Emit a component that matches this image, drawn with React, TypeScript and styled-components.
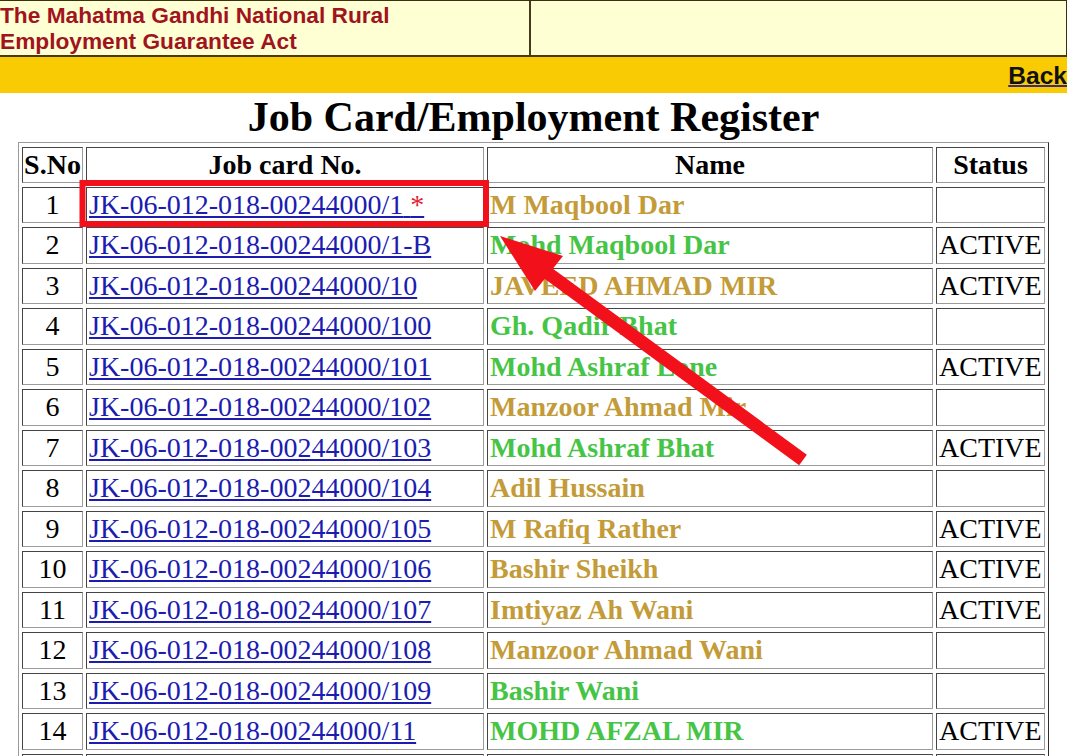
import React from "react";
import styled, { createGlobalStyle } from "styled-components";

const GlobalStyle = createGlobalStyle`
  html, body {
    margin: 0;
    padding: 0;
    background: #ffffff;
    overflow: hidden;
  }
  body {
    font-family: "Liberation Serif", "Times New Roman", serif;
  }
`;

const Page = styled.div`
  position: relative;
  width: 1067px;
  height: 756px;
  overflow: hidden;
`;

const Banner = styled.div`
  display: grid;
  grid-template-columns: 531px 1fr;
  height: 54px;
  background: #ffffd4;
  border-top: 1px solid #3b2f12;
  border-bottom: 2px solid #4a3814;
  border-right: 1px solid #3b2f12;
`;

const BannerCell = styled.div<{ $divider?: boolean }>`
  padding-top: 1px;
  border-right: ${(p) => (p.$divider ? "2px solid #463a1c" : "none")};
  font-family: "Liberation Sans", Arial, sans-serif;
  font-weight: bold;
  font-size: 22.7px;
  line-height: 26px;
  color: #a01420;
`;

const YellowBar = styled.div`
  display: flex;
  justify-content: flex-end;
  align-items: flex-start;
  height: 36px;
  background: #f8cb02;
`;

const BackLink = styled.a`
  font-family: "Liberation Sans", Arial, sans-serif;
  font-weight: bold;
  font-size: 24.6px;
  line-height: 30px;
  margin-top: 4px;
  color: #111;
  text-decoration: underline;
  text-decoration-color: #3a2a8c;
  text-decoration-thickness: 2px;
  cursor: pointer;
`;

const Title = styled.h1`
  margin: 0;
  text-align: center;
  font-family: "Liberation Serif", "Times New Roman", serif;
  font-weight: bold;
  font-size: 42px;
  line-height: 48.5px;
  color: #000;
`;

const Register = styled.table`
  width: 1031px;
  margin: 0 auto;
  table-layout: fixed;
  border-collapse: separate;
  border-spacing: 3px 4px;
  border-top: 1px solid #9a9a9a;
  border-left: 1px solid #9a9a9a;
  border-bottom: 1px solid #2e2e2e;
  border-right: 1px solid #2e2e2e;
  font-family: "Liberation Serif", "Times New Roman", serif;
  font-size: 28px;
`;

const HeadCell = styled.th<{ $w: number }>`
  box-sizing: border-box;
  width: ${(p) => p.$w}px;
  padding: 0 1px;
  height: 36px;
  line-height: 34px;
  font-weight: bold;
  text-align: center;
  white-space: nowrap;
  border-top: 1px solid #454545;
  border-left: 1px solid #454545;
  border-bottom: 1px solid #9c9c9c;
  border-right: 1px solid #9c9c9c;
`;

const Cell = styled.td<{ $align?: string }>`
  box-sizing: border-box;
  padding: 0 2px;
  height: 36.5px;
  line-height: 34.5px;
  text-align: ${(p) => p.$align || "left"};
  white-space: nowrap;
  overflow: hidden;
  border-top: 1px solid #454545;
  border-left: 1px solid #454545;
  border-bottom: 1px solid #9c9c9c;
  border-right: 1px solid #9c9c9c;
  color: #000;
`;

const CardLink = styled.a`
  color: #1c1cb0;
  text-decoration: underline;
  cursor: pointer;
`;

const Star = styled.span`
  color: #e41c34;
`;

const PersonName = styled.span<{ $tone: "gold" | "green" }>`
  font-weight: bold;
  color: ${(p) => (p.$tone === "gold" ? "#c39b38" : "#46c446")};
`;

const Overlay = styled.svg`
  position: absolute;
  top: 0;
  left: 0;
  pointer-events: none;
`;

type Row = {
  card: string;
  name: string;
  tone: "gold" | "green";
  active: boolean;
  star?: boolean;
};

const rows: Row[] = [
  { card: "JK-06-012-018-00244000/1", name: "M Maqbool Dar", tone: "gold", active: false, star: true },
  { card: "JK-06-012-018-00244000/1-B", name: "Mohd Maqbool Dar", tone: "green", active: true },
  { card: "JK-06-012-018-00244000/10", name: "JAVEED AHMAD MIR", tone: "gold", active: true },
  { card: "JK-06-012-018-00244000/100", name: "Gh. Qadir Bhat", tone: "green", active: false },
  { card: "JK-06-012-018-00244000/101", name: "Mohd Ashraf Lone", tone: "green", active: true },
  { card: "JK-06-012-018-00244000/102", name: "Manzoor Ahmad Mir", tone: "gold", active: false },
  { card: "JK-06-012-018-00244000/103", name: "Mohd Ashraf Bhat", tone: "green", active: true },
  { card: "JK-06-012-018-00244000/104", name: "Adil Hussain", tone: "gold", active: false },
  { card: "JK-06-012-018-00244000/105", name: "M Rafiq Rather", tone: "gold", active: true },
  { card: "JK-06-012-018-00244000/106", name: "Bashir Sheikh", tone: "gold", active: true },
  { card: "JK-06-012-018-00244000/107", name: "Imtiyaz Ah Wani", tone: "gold", active: true },
  { card: "JK-06-012-018-00244000/108", name: "Manzoor Ahmad Wani", tone: "gold", active: false },
  { card: "JK-06-012-018-00244000/109", name: "Bashir Wani", tone: "green", active: false },
  { card: "JK-06-012-018-00244000/11", name: "MOHD AFZAL MIR", tone: "green", active: true },
  { card: "JK-06-012-018-00244000/110", name: "Ghulam Nabi Dar", tone: "gold", active: true },
];

export default function App() {
  return (
    <Page>
      <GlobalStyle />
      <Banner>
        <BannerCell $divider>
          The Mahatma Gandhi National Rural
          <br />
          Employment Guarantee Act
        </BannerCell>
        <BannerCell />
      </Banner>
      <YellowBar>
        <BackLink>Back</BackLink>
      </YellowBar>
      <Title>Job Card/Employment Register</Title>
      <Register>
        <thead>
          <tr>
            <HeadCell $w={61}>S.No</HeadCell>
            <HeadCell $w={398}>Job card No.</HeadCell>
            <HeadCell $w={446}>Name</HeadCell>
            <HeadCell $w={109}>Status</HeadCell>
          </tr>
        </thead>
        <tbody>
          {rows.map((r, i) => (
            <tr key={r.card}>
              <Cell $align="center">{i + 1}</Cell>
              <Cell>
                <CardLink>
                  {r.card}
                  {r.star ? (
                    <>
                      {" "}
                      <Star>*</Star>
                    </>
                  ) : null}
                </CardLink>
              </Cell>
              <Cell>
                <PersonName $tone={r.tone}>{r.name}</PersonName>
              </Cell>
              <Cell>{r.active ? "ACTIVE" : ""}</Cell>
            </tr>
          ))}
        </tbody>
      </Register>
      <Overlay width="1067" height="756" viewBox="0 0 1067 756">
        <rect x="82.5" y="183" width="403.5" height="41" fill="none" stroke="#f2101a" strokeWidth="6" />
        <line x1="545" y1="271" x2="803" y2="460" stroke="#f2101a" strokeWidth="13" />
        <polygon points="500,236 563,256 535,291" fill="#f2101a" />
      </Overlay>
    </Page>
  );
}
